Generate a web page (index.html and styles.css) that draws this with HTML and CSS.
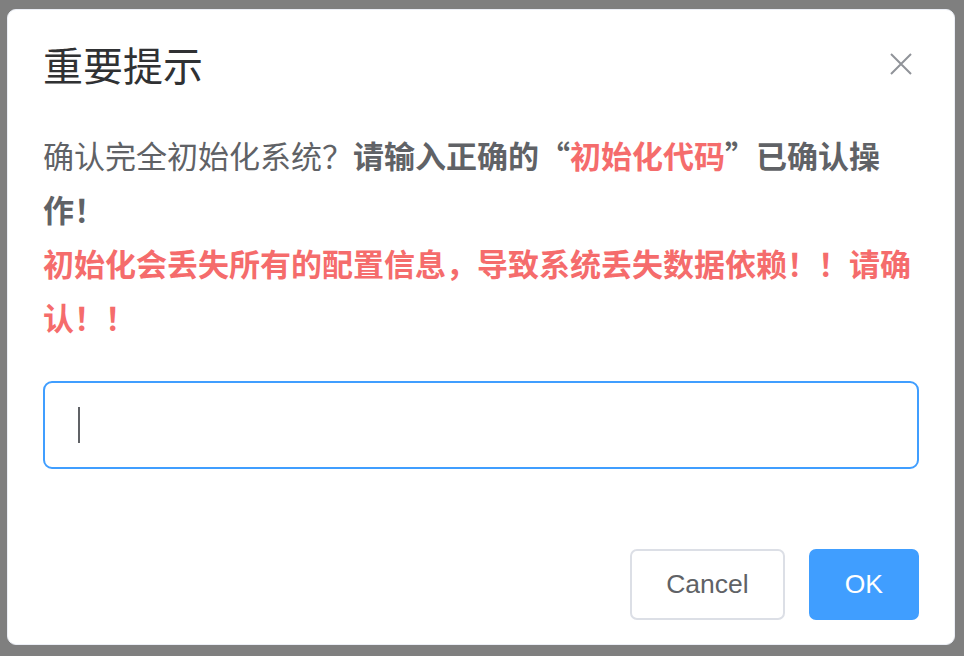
FILE: index.html
```html
<!DOCTYPE html>
<html lang="zh-CN">
<head>
<meta charset="utf-8">
<title>重要提示</title>
<link rel="stylesheet" href="styles.css">
</head>
<body>
<div class="msgbox">
  <div class="msgbox-header">
    <span class="msgbox-title">重要提示</span>
    <button class="msgbox-close" aria-label="Close">
      <svg width="22" height="22" viewBox="0 0 22 22"><path d="M1 1 L21 21 M21 1 L1 21" stroke="#909399" stroke-width="2" fill="none"/></svg>
    </button>
  </div>
  <div class="msgbox-content">
    <p class="msgbox-message">确认完全初始化系统？<strong>请输入正确的“<span class="danger">初始化代码</span>”已确认操作！</strong><br><strong class="danger">初始化会丢失所有的配置信息，导致系统丢失数据依赖！！请确认！！</strong></p>
    <div class="msgbox-input">
      <input class="text-input is-focus" type="text">
      <span class="fake-caret"></span>
    </div>
  </div>
  <div class="msgbox-btns">
    <button class="btn">Cancel</button>
    <button class="btn btn-primary">OK</button>
  </div>
</div>
</body>
</html>
```

FILE: styles.css
```css
html, body {
  margin: 0;
  height: 100%;
}
body {
  background: #7f7f7f;
  padding: 9px 0 0 7px;
  box-sizing: border-box;
  font-family: "Noto Sans CJK SC", "Liberation Sans", sans-serif;
}
.msgbox {
  width: 948px;
  height: 636px;
  box-sizing: border-box;
  background: #fff;
  border: 1px solid #ebeef5;
  border-radius: 9px;
  padding-bottom: 24px;
  display: flex;
  flex-direction: column;
}
.msgbox-header {
  display: flex;
  align-items: center;
  justify-content: space-between;
  padding: 34px 42px 22px 35px;
}
.msgbox-title {
  font-size: 40px;
  line-height: 40px;
  color: #303133;
}
.msgbox-close {
  width: 22px;
  height: 22px;
  padding: 0;
  margin: 0;
  border: 0;
  background: transparent;
  display: flex;
}
.msgbox-content {
  padding: 22px 35px 0;
  flex: 1;
}
.msgbox-message {
  margin: 0;
  font-size: 31px;
  line-height: 54px;
  color: #606266;
}
.msgbox-message strong {
  font-weight: 700;
}
.danger {
  color: #f56c6c;
}
.msgbox-input {
  position: relative;
  padding-top: 37px;
}
.text-input {
  display: block;
  width: 100%;
  height: 88px;
  box-sizing: border-box;
  border: 2px solid #dcdfe6;
  border-radius: 9px;
  padding: 0 34px;
  font-size: 31px;
  color: #606266;
  outline: none;
  caret-color: transparent;
  background: #fff;
}
.text-input.is-focus {
  border-color: #409eff;
}
.fake-caret {
  position: absolute;
  left: 35px;
  top: 63px;
  width: 2px;
  height: 36px;
  background: #606266;
}
.msgbox-btns {
  display: flex;
  justify-content: flex-end;
  gap: 24px;
  padding: 0 35px;
}
.btn {
  height: 71px;
  box-sizing: border-box;
  border: 2px solid #dcdfe6;
  border-radius: 7px;
  background: #fff;
  color: #606266;
  font-family: "Liberation Sans", Arial, sans-serif;
  font-size: 26.5px;
  padding: 0 34px;
  display: flex;
  align-items: center;
  justify-content: center;
}
.btn-primary {
  background: #409eff;
  border-color: #409eff;
  color: #fff;
}
```
